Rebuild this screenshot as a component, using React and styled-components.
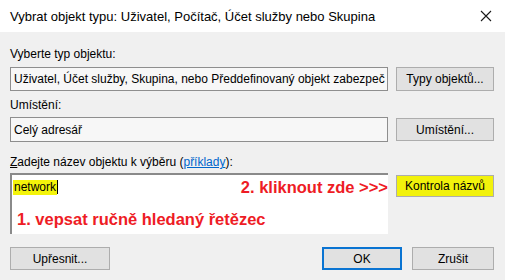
import React from "react";
import styled, { createGlobalStyle } from "styled-components";

const GlobalStyle = createGlobalStyle`
  html, body {
    margin: 0;
    padding: 0;
    background: #f0f0f0;
  }
  body {
    font-family: "Liberation Sans", Arial, sans-serif;
    font-size: 12px;
    color: #000;
  }
`;

const App = () => {
  const [name, setName] = React.useState("network");

  return (
    <Dialog>
      <GlobalStyle />
      <TitleBar>
        <Title>Vybrat objekt typu: Uživatel, Počítač, Účet služby nebo Skupina</Title>
        <CloseButton aria-label="Zavřít">
          <svg width="12" height="12" viewBox="0 0 12 12">
            <path d="M1 1 L11 11 M11 1 L1 11" stroke="#1a1a1a" strokeWidth="1.1" />
          </svg>
        </CloseButton>
      </TitleBar>

      <Body>
        <Label>Vyberte typ objektu:</Label>
        <FieldRow>
          <ReadOnlyBox>Uživatel, Účet služby, Skupina, nebo Předdefinovaný objekt zabezpeč</ReadOnlyBox>
          <Button>Typy objektů...</Button>
        </FieldRow>

        <Label $gap={7}>Umístění:</Label>
        <FieldRow $gap={5}>
          <ReadOnlyBox $height={25}>Celý adresář</ReadOnlyBox>
          <Button $height={23} $offset={1}>Umístění...</Button>
        </FieldRow>

        <Label $gap={13}>
          <u>Z</u>adejte název objektu k výběru (<Link href="#">příklady</Link>):
        </Label>
        <FieldRow $gap={4}>
          <NameBox>
            <NameLine>
              <Typed>
                <Highlight>{name}</Highlight>
                <Caret />
              </Typed>
              <Hint>2. kliknout zde &gt;&gt;&gt;</Hint>
            </NameLine>
            <Hint $indent={4}>1. vepsat ručně hledaný řetězec</Hint>
          </NameBox>
          <Button $height={22} $offset={2} $yellow onClick={() => setName(name)}>
            Kontrola názvů
          </Button>
        </FieldRow>

        <Footer>
          <Button $width={100}>Upřesnit...</Button>
          <FooterRight>
            <Button $width={80} $primary>OK</Button>
            <Button $width={82}>Zrušit</Button>
          </FooterRight>
        </Footer>
      </Body>
    </Dialog>
  );
};

const Dialog = styled.div`
  width: 505px;
  height: 280px;
  background: #f0f0f0;
  overflow: hidden;
`;

const TitleBar = styled.div`
  display: flex;
  align-items: center;
  justify-content: space-between;
  height: 32px;
  padding: 0 8px 0 10px;
  background: #fff;
`;

const Title = styled.div`
  font-size: 13px;
  color: #000;
  white-space: nowrap;
`;

const CloseButton = styled.div`
  display: flex;
  align-items: center;
  justify-content: center;
  width: 22px;
  height: 22px;
  margin-top: -1px;
`;

const Body = styled.div`
  padding: 15px 11px 0 10px;
`;

const Label = styled.div`
  margin-top: ${(p) => p.$gap || 0}px;
  line-height: 14px;
  height: 14px;
  white-space: nowrap;

  u {
    text-decoration-thickness: 1px;
  }
`;

const Link = styled.a`
  color: #0066cc;
  text-decoration: underline;
`;

const FieldRow = styled.div`
  display: grid;
  grid-template-columns: 378px 98px;
  column-gap: 8px;
  align-items: start;
  margin-top: ${(p) => (p.$gap === undefined ? 6 : p.$gap)}px;
`;

const ReadOnlyBox = styled.div`
  box-sizing: border-box;
  height: ${(p) => p.$height || 24}px;
  padding: 0 2px 0 3px;
  display: flex;
  align-items: center;
  background: #f7f7f7;
  border: 1px solid #8e8e8e;
  white-space: nowrap;
  overflow: hidden;
`;

const Button = styled.div`
  box-sizing: border-box;
  display: flex;
  align-items: center;
  justify-content: center;
  width: ${(p) => (p.$width ? `${p.$width}px` : "auto")};
  height: ${(p) => p.$height || 24}px;
  margin-top: ${(p) => p.$offset || 0}px;
  background: ${(p) => (p.$yellow ? "#f2f20c" : "#e1e1e1")};
  border: ${(p) => (p.$primary ? "2px solid #0a74d2" : "1px solid #adadad")};
  white-space: nowrap;
  cursor: default;
`;

const NameBox = styled.div`
  box-sizing: border-box;
  height: 61px;
  background: #fff;
  border-top: 2px solid #8a8a8a;
  border-left: 2px solid #8a8a8a;
  padding: 3px 0 0 1px;
`;

const NameLine = styled.div`
  display: flex;
  align-items: center;
  justify-content: space-between;
  height: 18px;
`;

const Typed = styled.div`
  display: flex;
  align-items: center;
  height: 15px;
`;

const Highlight = styled.span`
  display: inline-block;
  background: #f4f40a;
  line-height: 15px;
  padding: 0 1px 0 1px;
`;

const Caret = styled.span`
  display: inline-block;
  width: 1px;
  height: 14px;
  background: #000;
`;

const Hint = styled.div`
  font-size: 16.5px;
  font-weight: bold;
  color: #ee1c25;
  white-space: nowrap;
  line-height: 20px;
  margin-top: ${(p) => (p.$indent ? 13 : 0)}px;
  padding-left: ${(p) => p.$indent || 0}px;
`;

const Footer = styled.div`
  display: flex;
  justify-content: space-between;
  margin-top: 13px;

  ${Button} {
    height: 23px;
  }
`;

const FooterRight = styled.div`
  display: flex;
  gap: 10px;
  margin-right: 0;
`;

export default App;
